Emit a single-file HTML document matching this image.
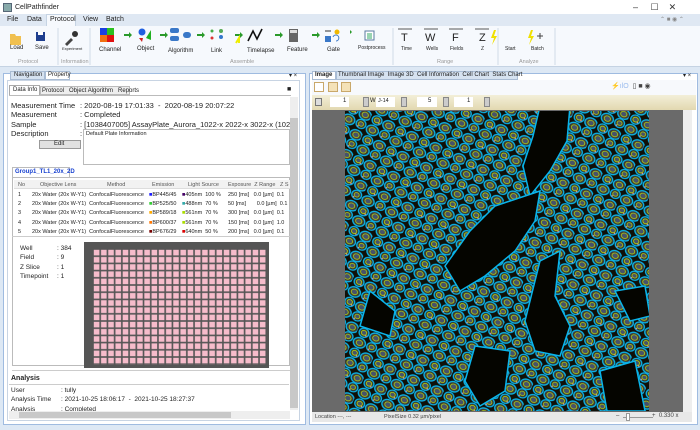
<!DOCTYPE html>
<html><head><meta charset="utf-8"><style>
*{box-sizing:border-box;margin:0;padding:0}
body{width:700px;height:430px;overflow:hidden;background:#dde8f4;font-family:"Liberation Sans",sans-serif;font-size:7px;color:#222;position:relative}
.a{position:absolute}
.t{position:absolute;white-space:nowrap}
</style></head><body>
<!-- title -->
<div class="a" style="left:0;top:0;width:700px;height:16px;background:#fff"></div>
<div class="a" style="left:3px;top:3px;width:9px;height:9px;background:#8aa;border:1px solid #567"></div>
<div class="t" style="left:15px;top:4px;font-size:7px">CellPathfinder</div>
<div class="t" style="left:633px;top:2px;font-size:9px;color:#333">–&nbsp;&nbsp;&nbsp;&nbsp;&nbsp;☐&nbsp;&nbsp;&nbsp;&nbsp;✕</div>
<!-- menu -->
<div class="a" style="left:0;top:14px;width:700px;height:12px;background:#dfe8f3"></div>
<div class="t" style="left:7px;top:16px">File</div>
<div class="t" style="left:27px;top:16px">Data</div>
<div class="a" style="left:46px;top:14px;width:30px;height:13px;background:#f6f9fd;border:1px solid #c5d3e3;border-bottom:none"></div>
<div class="t" style="left:50px;top:16px">Protocol</div>
<div class="t" style="left:83px;top:16px">View</div>
<div class="t" style="left:106px;top:16px">Batch</div>
<!-- ribbon -->
<div class="a" style="left:0;top:26px;width:700px;height:41px;background:#f6f9fd;border-bottom:1px solid #c5d3e3"></div>
<svg class="a" style="left:0;top:26px" width="700" height="41">
<g fill="#f0c050"><path d="M10 8h5l1 2h5v9h-11z"/></g>
<rect x="36" y="6" width="9" height="9" fill="#1f3f8f"/><rect x="38" y="6" width="5" height="3" fill="#fff"/>
<path d="M65 18l6-6 2 2-6 6z" fill="#444"/><circle cx="75" cy="8" r="3" fill="#333"/>
<rect x="100" y="2" width="7" height="7" fill="#1a3fe0"/><rect x="107" y="2" width="7" height="7" fill="#2ac020"/><rect x="100" y="9" width="7" height="7" fill="#f07010"/><rect x="107" y="9" width="7" height="7" fill="#e01010"/>
<g fill="#2a9a2a"><path d="M124 8h5v-2l3 3-3 3v-2h-5z"/><path d="M160 8h5v-2l3 3-3 3v-2h-5z"/><path d="M197 8h5v-2l3 3-3 3v-2h-5z"/><path d="M235 8h5v-2l3 3-3 3v-2h-5z"/><path d="M275 8h5v-2l3 3-3 3v-2h-5z"/><path d="M312 8h5v-2l3 3-3 3v-2h-5z"/><path d="M347 6h3v-2l2 2-2 2v-2h-3z"/></g>
<circle cx="142" cy="6" r="3.5" fill="#2060e0"/><path d="M146 12l5-8v10z" fill="#20b020"/><path d="M139 12l3 4 1-4z" fill="#d02020"/>
<rect x="170" y="2" width="9" height="5" rx="2" fill="#3a78c8"/><rect x="170" y="10" width="9" height="5" rx="2" fill="#3a78c8"/><rect x="183" y="6" width="8" height="6" rx="3" fill="#3a78c8"/>
<circle cx="212" cy="5" r="1.5" fill="#4a4"/><circle cx="212" cy="12" r="1.5" fill="#d33"/><circle cx="221" cy="5" r="2" fill="#5a5"/><circle cx="221" cy="11" r="2" fill="#37c"/>
<path d="M236 17l3-5v5" stroke="#ee0" stroke-width="2" fill="none"/>
<path d="M248 15l5-10 4 8 5-10" stroke="#111" stroke-width="1.6" fill="none"/>
<rect x="289" y="3" width="9" height="13" fill="#666"/><rect x="290" y="4" width="7" height="3" fill="#ddd"/>
<circle cx="337" cy="6" r="2.5" fill="#f0b800"/><rect x="325" y="10" width="6" height="6" fill="#3a78c8"/><path d="M333 11a3 3 0 1 1 3 4" stroke="#3a78c8" fill="none"/><path d="M325 5h6" stroke="#333"/>
<rect x="365" y="5" width="9" height="9" fill="#fff" stroke="#5a7aa0"/><path d="M367 8h5M367 10h5M367 12h5" stroke="#3a6"/>
<g stroke="#222" stroke-width=".7"><path d="M398 3h14M424 3h14M449 3h14M475 3h14"/></g>
<path d="M494 4l-3 8h3l-2 7 5-9h-3l2-6z" fill="#f0e000"/><path d="M531 4l-3 8h3l-2 7 5-9h-3l2-6z" fill="#f0e000"/><path d="M537 10h6M540 7v6" stroke="#444"/>
<g stroke="#d0dbe8"><path d="M58 2v37M90 2v37M393 2v37M498 2v37M555 2v37"/></g>
</svg>
<div class="t" style="left:10px;top:45px;font-size:6px">Load</div>
<div class="t" style="left:35px;top:45px;font-size:6px">Save</div>
<div class="t" style="left:62px;top:46px;font-size:4px">Experiment</div>
<div class="t" style="left:99px;top:47px;font-size:6px">Channel</div>
<div class="t" style="left:137px;top:46px;font-size:6px">Object</div>
<div class="t" style="left:168px;top:48px;font-size:6px">Algorithm</div>
<div class="t" style="left:211px;top:48px;font-size:6px">Link</div>
<div class="t" style="left:247px;top:48px;font-size:6px">Timelapse</div>
<div class="t" style="left:287px;top:47px;font-size:6px">Feature</div>
<div class="t" style="left:327px;top:47px;font-size:6px">Gate</div>
<div class="t" style="left:358px;top:45px;font-size:5px">Postprocess</div>
<div class="t" style="left:401px;top:32px;font-size:11px">T</div><div class="t" style="left:401px;top:46px;font-size:5px">Time</div>
<div class="t" style="left:425px;top:32px;font-size:11px">W</div><div class="t" style="left:426px;top:46px;font-size:5px">Wells</div>
<div class="t" style="left:452px;top:32px;font-size:11px">F</div><div class="t" style="left:450px;top:46px;font-size:5px">Fields</div>
<div class="t" style="left:479px;top:32px;font-size:11px">Z</div><div class="t" style="left:481px;top:46px;font-size:5px">Z</div>
<div class="t" style="left:505px;top:46px;font-size:5px">Start</div>
<div class="t" style="left:531px;top:46px;font-size:5px">Batch</div>
<div class="t" style="left:18px;top:59px;font-size:5.5px;color:#999">Protocol</div>
<div class="t" style="left:61px;top:59px;font-size:5.5px;color:#999">Information</div>
<div class="t" style="left:230px;top:59px;font-size:5.5px;color:#999">Assemble</div>
<div class="t" style="left:437px;top:59px;font-size:5.5px;color:#999">Range</div>
<div class="t" style="left:519px;top:59px;font-size:5.5px;color:#999">Analyze</div>
<div class="t" style="left:660px;top:16px;font-size:6px;color:#888">⌃ ■ ◉ ⌃</div>

<!-- left panel -->
<div class="a" style="left:3px;top:73px;width:303px;height:352px;background:#fff;border:1px solid #9fbbe0"></div>
<div class="a" style="left:10px;top:71px;width:35px;height:9px;background:#d6e2f0;border:1px solid #a9bcd4"></div>
<div class="t" style="left:14px;top:72px;font-size:6px">Navigation</div>
<div class="a" style="left:45px;top:71px;width:25px;height:9px;background:#fff;border:1px solid #a9bcd4"></div>
<div class="t" style="left:48px;top:72px;font-size:6px">Property</div>
<div class="t" style="left:289px;top:72px;font-size:6px">▾ ×</div>
<div class="a" style="left:7px;top:80px;width:293px;height:341px;background:#fff;border:1px solid #c8d4e3"></div>
<div class="a" style="left:9px;top:85px;width:31px;height:10px;border:1px solid #aaa;border-bottom:none;background:#fff"></div>
<div class="t" style="left:13px;top:87px;font-size:6px">Data Info</div>
<div class="a" style="left:40px;top:86px;width:90px;height:9px;background:#eee;border:1px solid #bbb"></div>
<div class="t" style="left:42px;top:88px;font-size:6px">Protocol&nbsp;&nbsp; Object Algorithm&nbsp;&nbsp; Reports</div>
<div class="t" style="left:287px;top:86px;font-size:7px">■</div>
<div class="a" style="left:9px;top:95px;width:282px;height:1px;background:#bbb"></div>
<div class="t" style="left:11px;top:101px;font-size:7.5px;line-height:9.3px">Measurement Time<br>Measurement<br>Sample<br>Description</div>
<div class="a" style="left:80px;top:100px;width:210px;height:40px;overflow:hidden">
<div class="t" style="left:0;top:1px;font-size:7.5px;line-height:9.3px">: 2020-08-19 17:01:33&nbsp; - &nbsp;2020-08-19 20:07:22<br>: Completed<br>: [1038407005] AssayPlate_Aurora_1022-x 2022-x 3022-x (1022-x 2022<br>:</div></div>
<div class="a" style="left:83px;top:129px;width:207px;height:36px;border:1px solid #bbb;background:#fff"></div>
<div class="t" style="left:86px;top:131px;font-size:5.5px">Default Plate Information</div>
<div class="a" style="left:39px;top:140px;width:42px;height:9px;background:#e1e1e1;border:1px solid #999"></div>
<div class="t" style="left:54px;top:141px;font-size:6px">Edit</div>
<div class="a" style="left:290px;top:97px;width:8px;height:313px;background:#eee"></div>
<div class="a" style="left:290px;top:118px;width:8px;height:290px;background:#c8c8c8"></div>
<div class="a" style="left:12px;top:167px;width:58px;height:10px;border:1px solid #bbb;border-bottom:none"></div>
<div class="t" style="left:15px;top:169px;font-size:6px;color:#1640d0;font-weight:bold">Group1_TL1_20x_2D</div>
<div class="a" style="left:12px;top:177px;width:278px;height:189px;border:1px solid #bbb"></div>
<div class="a" style="left:14px;top:180px;width:276px;height:9px;background:#f2f2f2;border-bottom:1px solid #ddd"></div>
<div class="t" style="left:18px;top:182px;font-size:5.5px;color:#555">No</div>
<div class="t" style="left:40px;top:182px;font-size:5.5px;color:#555">Objective Lens</div>
<div class="t" style="left:107px;top:182px;font-size:5.5px;color:#555">Method</div>
<div class="t" style="left:152px;top:182px;font-size:5.5px;color:#555">Emission</div>
<div class="t" style="left:188px;top:182px;font-size:5.5px;color:#555">Light Source</div>
<div class="t" style="left:228px;top:182px;font-size:5.5px;color:#555">Exposure&nbsp; Z Range&nbsp;&nbsp; Z S</div>
<div class="t" style="left:18px;top:191px;font-size:5.5px;line-height:9.2px">1<br>2<br>3<br>4<br>5</div>
<div class="t" style="left:32px;top:191px;font-size:5.5px;line-height:9.2px">20x Water (20x W-Y1)&nbsp; ConfocalFluorescence<br>20x Water (20x W-Y1)&nbsp; ConfocalFluorescence<br>20x Water (20x W-Y1)&nbsp; ConfocalFluorescence<br>20x Water (20x W-Y1)&nbsp; ConfocalFluorescence<br>20x Water (20x W-Y1)&nbsp; ConfocalFluorescence</div>
<div class="t" style="left:149px;top:191px;font-size:5.5px;line-height:9.2px"><span style="color:#1a1aff">■</span>BP445/45<br><span style="color:#3c3">■</span>BP525/50<br><span style="color:#fa0">■</span>BP589/18<br><span style="color:#f70">■</span>BP600/37<br><span style="color:#700">■</span>BP676/29</div>
<div class="t" style="left:182px;top:191px;font-size:5.5px;line-height:9.2px"><span style="color:#406">■</span>405nm&nbsp; 100 %<br><span style="color:#3aa">■</span>488nm&nbsp; 70 %<br><span style="color:#ad0">■</span>561nm&nbsp; 70 %<br><span style="color:#ad0">■</span>561nm&nbsp; 70 %<br><span style="color:#d00">■</span>640nm&nbsp; 50 %</div>
<div class="t" style="left:228px;top:191px;font-size:5.5px;line-height:9.2px">250 [ms]&nbsp;&nbsp; 0.0 [µm]&nbsp; 0.1<br>50 [ms]&nbsp;&nbsp;&nbsp;&nbsp;&nbsp;&nbsp; 0.0 [µm]&nbsp; 0.1<br>300 [ms]&nbsp;&nbsp; 0.0 [µm]&nbsp; 0.1<br>150 [ms]&nbsp;&nbsp; 0.0 [µm]&nbsp; 1.0<br>200 [ms]&nbsp;&nbsp; 0.0 [µm]&nbsp; 0.1</div>
<div class="a" style="left:12px;top:236px;width:278px;height:1px;background:#ccc"></div>
<div class="t" style="left:20px;top:244px;font-size:6.5px;line-height:9.3px">Well<br>Field<br>Z Slice<br>Timepoint</div>
<div class="t" style="left:57px;top:244px;font-size:6.5px;line-height:9.3px">: 384<br>: 9<br>: 1<br>: 1</div>
<svg class="a" style="left:84px;top:242px" width="185" height="126">
<defs><pattern id="w" x="9" y="7" width="7.22" height="7.2" patternUnits="userSpaceOnUse"><rect x=".8" y=".8" width="5.6" height="5.6" fill="#f6bccb"/></pattern></defs>
<rect width="185" height="126" fill="#555"/>
<rect x="9" y="7" width="173" height="116" fill="url(#w)"/>
</svg>
<div class="a" style="left:12px;top:370px;width:278px;height:1px;background:#ccc"></div>
<div class="t" style="left:11px;top:375px;font-size:7px;font-weight:bold">Analysis</div>
<div class="a" style="left:9px;top:384px;width:280px;height:1px;background:#ccc"></div>
<div class="t" style="left:11px;top:386px;font-size:6.5px;line-height:9.3px">User<br>Analysis Time<br>Analysis</div>
<div class="t" style="left:61px;top:386px;font-size:6.5px;line-height:9.3px">: tully<br>: 2021-10-25 18:06:17&nbsp; - &nbsp;2021-10-25 18:27:37<br>: Completed</div>
<div class="a" style="left:9px;top:411px;width:281px;height:8px;background:#eee"></div>
<div class="a" style="left:19px;top:412px;width:212px;height:6px;background:#c8c8c8"></div>

<!-- right panel -->
<div class="a" style="left:309px;top:73px;width:389px;height:352px;background:#fff;border:1px solid #9fbbe0"></div>
<div class="a" style="left:312px;top:71px;width:24px;height:9px;background:#fff;border:1px solid #a9bcd4"></div>
<div class="a" style="left:336px;top:71px;width:182px;height:9px;background:#d6e2f0;border:1px solid #a9bcd4"></div>
<div class="t" style="left:315px;top:72px;font-size:6px;font-weight:bold">Image</div>
<div class="t" style="left:338px;top:72px;font-size:6px">Thumbnail Image&nbsp; Image 3D&nbsp; Cell Information&nbsp; Cell Chart&nbsp; Stats Chart</div>
<div class="t" style="left:683px;top:72px;font-size:6px">▾ ×</div>
<div class="a" style="left:312px;top:80px;width:384px;height:15px;background:#f7f9fc"></div>
<div class="a" style="left:314px;top:82px;width:10px;height:10px;border:1px solid #c9a86a;background:#fff"></div>
<div class="a" style="left:328px;top:82px;width:10px;height:10px;border:1px solid #c9a86a;background:#f4e2b8"></div>
<div class="a" style="left:341px;top:82px;width:10px;height:10px;border:1px solid #c9a86a;background:#f4e2b8"></div>
<div class="t" style="left:611px;top:82px;font-size:7px;color:#aac">⚡<span style="color:#9be">ılO</span>&nbsp;&nbsp;<span style="color:#444">▯ ■ ◉</span></div>
<div class="a" style="left:312px;top:95px;width:384px;height:15px;background:linear-gradient(#f3efd8,#e2d8b0)"></div>
<div class="a" style="left:315px;top:98px;width:7px;height:8px;border:1px solid #777;background:#ddd"></div>
<div class="a" style="left:330px;top:97px;width:19px;height:10px;background:#fff"></div>
<div class="t" style="left:343px;top:98px;font-size:6px">1</div>
<div class="a" style="left:363px;top:97px;width:6px;height:10px;background:#ccc;border:1px solid #888"></div>
<div class="t" style="left:370px;top:98px;font-size:6px">W</div>
<div class="a" style="left:376px;top:97px;width:19px;height:10px;background:#fff"></div>
<div class="t" style="left:378px;top:98px;font-size:5.5px">J-14</div>
<div class="a" style="left:401px;top:97px;width:6px;height:10px;background:#ccc;border:1px solid #888"></div>
<div class="a" style="left:417px;top:97px;width:20px;height:10px;background:#fff"></div>
<div class="t" style="left:428px;top:98px;font-size:6px">5</div>
<div class="a" style="left:443px;top:97px;width:6px;height:10px;background:#ccc;border:1px solid #888"></div>
<div class="a" style="left:454px;top:97px;width:19px;height:10px;background:#fff"></div>
<div class="t" style="left:467px;top:98px;font-size:6px">1</div>
<div class="a" style="left:484px;top:97px;width:6px;height:10px;background:#ccc;border:1px solid #888"></div>
<div class="a" style="left:312px;top:110px;width:371px;height:302px;background:#6a6a6a"></div>
<div class="a" style="left:683px;top:110px;width:9px;height:302px;background:#eee"></div>
<svg class="a" style="left:345px;top:111px" width="304" height="300">
<defs>
<pattern id="c" width="26" height="22" patternUnits="userSpaceOnUse" patternTransform="rotate(25)">
<rect width="26" height="22" fill="#101008"/>
<g stroke="#0ab4ea" stroke-width="1.3">
<ellipse cx="7" cy="6" rx="6.3" ry="5" fill="#3a3a2e"/>
<ellipse cx="20" cy="17" rx="6.3" ry="5" fill="#3e3a36"/>
<ellipse cx="20" cy="5" rx="5" ry="4.5" fill="#34322a"/>
<ellipse cx="7" cy="17" rx="5" ry="4.5" fill="#34322a"/>
</g>
<g fill="#46526a" stroke="#c8e800" stroke-width=".7">
<ellipse cx="7" cy="6" rx="3.3" ry="2.7"/><ellipse cx="20" cy="17" rx="3.3" ry="2.7"/><ellipse cx="7" cy="17" rx="2.8" ry="2.4"/><ellipse cx="20" cy="5" rx="2.6" ry="2.2"/>
</g>
<circle cx="18" cy="8" r=".8" fill="#d9a"/><circle cx="10" cy="19" r=".8" fill="#d9a"/>
</pattern>
</defs>
<rect width="304" height="300" fill="url(#c)"/>
<g fill="#050500" stroke="#0ab4ea" stroke-width="1.5">
<path d="M195 -5 L225 -5 L222 30 L205 60 L185 85 L178 55 L188 25 Z"/>
<path d="M150 95 L195 80 L190 110 L170 140 L140 165 L115 180 L100 155 L125 120 Z"/>
<path d="M195 150 L215 140 L210 185 L225 215 L215 245 L190 240 L180 210 Z"/>
<path d="M130 235 L165 240 L160 280 L135 295 L120 270 Z"/>
<path d="M25 180 L50 200 L45 225 L15 215 Z"/>
<path d="M255 260 L290 250 L300 300 L262 300 Z"/>
<path d="M270 180 L300 175 L305 205 L285 210 Z"/>
</g>
</svg>
<div class="a" style="left:312px;top:412px;width:380px;height:10px;background:#e8e8e8"></div>
<div class="t" style="left:315px;top:414px;font-size:5.5px;color:#444">Location ---, ---</div>
<div class="t" style="left:384px;top:414px;font-size:5.5px;color:#444">PixelSize 0.32 µm/pixel</div>
<div class="t" style="left:616px;top:413px;font-size:6px;color:#444">–</div>
<div class="a" style="left:623px;top:417px;width:30px;height:1px;background:#999"></div>
<div class="a" style="left:626px;top:413px;width:4px;height:8px;background:#fff;border:1px solid #999"></div>
<div class="t" style="left:652px;top:413px;font-size:6px;color:#444">+&nbsp; 0.330 x</div>
</body></html>
